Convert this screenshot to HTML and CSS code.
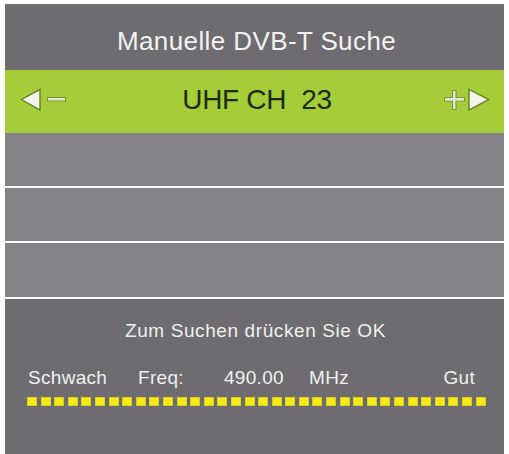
FILE: index.html
```html
<!DOCTYPE html>
<html lang="de">
<head>
<meta charset="utf-8">
<title>Manuelle DVB-T Suche</title>
<link rel="stylesheet" href="styles.css">
</head>
<body>
<div class="panel">
  <div class="title">Manuelle DVB-T Suche</div>
  <div class="channel">
    <div class="ctl ctl-left">
      <svg width="48" height="24" viewBox="0 0 48 24">
        <polygon points="1.5,11.5 20,1.5 20,22" fill="#f3f5ec" stroke="#5f7f22" stroke-width="1.4"/>
        <rect x="27.5" y="9.5" width="18" height="3.5" fill="#dfe5cf" stroke="#789438" stroke-width="1"/>
      </svg>
    </div>
    <div class="ch-text">UHF CH&nbsp; 23</div>
    <div class="ctl ctl-right">
      <svg width="48" height="24" viewBox="0 0 48 24">
        <rect x="0.5" y="9.5" width="20" height="3.5" fill="#dfe5cf" stroke="#789438" stroke-width="1"/>
        <rect x="8.5" y="2.5" width="3.5" height="19" fill="#dfe5cf" stroke="#789438" stroke-width="1"/>
        <rect x="1" y="10" width="19" height="2.5" fill="#dfe5cf"/>
        <polygon points="25,1.5 44.5,11.5 25,22" fill="#f3f5ec" stroke="#5f7f22" stroke-width="1.4"/>
      </svg>
    </div>
  </div>
  <div class="rows">
    <div class="row row-a"></div>
    <div class="row row-a"></div>
    <div class="row row-b"></div>
  </div>
  <div class="bottom">
    <div class="hint">Zum Suchen drücken Sie OK</div>
    <div class="signal">
      <span>Schwach</span>
      <span>Freq:</span>
      <span>490.00</span>
      <span>MHz</span>
      <span class="good">Gut</span>
    </div>
    <div class="bar">
      <i></i><i></i><i></i><i></i><i></i><i></i><i></i><i></i><i></i><i></i>
      <i></i><i></i><i></i><i></i><i></i><i></i><i></i><i></i><i></i><i></i>
      <i></i><i></i><i></i><i></i><i></i><i></i><i></i><i></i><i></i><i></i>
      <i></i><i></i><i></i><i></i>
    </div>
  </div>
</div>
</body>
</html>
```
FILE: styles.css
```css
html, body {
  margin: 0;
  padding: 0;
  background: #ffffff;
}
body {
  font-family: "Liberation Sans", Arial, sans-serif;
  height: 454px;
  overflow: hidden;
}
.panel {
  margin: 4px 5px 0 5px;
  display: flex;
  flex-direction: column;
  background: #ffffff;
}
.title {
  height: 66px;
  box-sizing: border-box;
  padding-top: 8px;
  line-height: 58px;
  background: #6e6c71;
  color: #f2f2f2;
  text-align: center;
  font-size: 26px;
  letter-spacing: 0.4px;
  padding-left: 4px;
}
.channel {
  height: 63px;
  box-sizing: border-box;
  padding: 0 12px 4px 15px;
  background: #a5cd3a;
  display: flex;
  align-items: center;
}
.ctl {
  width: 48px;
  height: 24px;
  display: flex;
}
.ctl svg {
  display: block;
}
.ch-text {
  flex: 1;
  text-align: center;
  color: #1d2b0c;
  font-size: 28px;
  line-height: 32px;
  letter-spacing: -0.3px;
  padding-left: 2px;
}
.rows {
  display: flex;
  flex-direction: column;
  gap: 2px;
}
.row {
  background: #858287;
  height: 53px;
}
.row-b {
  height: 54px;
}
.bottom {
  margin-top: 2px;
  height: 160px;
  background: #6e6c71;
  color: #f0f0f0;
}
.hint {
  padding-top: 20px;
  line-height: 24px;
  font-size: 19px;
  text-align: center;
  letter-spacing: 0.6px;
  padding-left: 2px;
}
.signal {
  margin-top: 24px;
  display: grid;
  grid-template-columns: 110px 86px 85px 1fr auto;
  padding: 0 29px 0 23px;
  line-height: 22px;
  font-size: 19px;
  letter-spacing: 0.3px;
}
.bar {
  margin-top: 8px;
  display: flex;
  justify-content: space-between;
  padding: 0 18px 0 22px;
}
.bar i {
  display: block;
  width: 10px;
  height: 9px;
  background: #f4ec14;
  box-shadow: inset 0 0 0 1px #d8d020;
}
```
